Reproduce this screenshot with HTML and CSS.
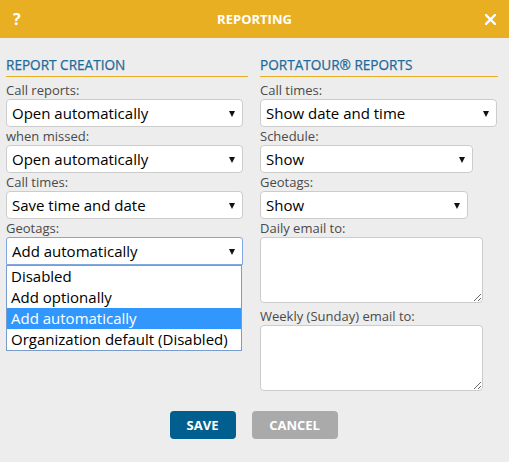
FILE: index.html
```html
<!DOCTYPE html>
<html lang="en">
<head>
  <meta charset="UTF-8" />
  <title>Reporting</title>
  <meta name="viewport" content="width=device-width, initial-scale=1.0" />
  <link rel="stylesheet" href="styles.css">
</head>
<body>
  <div class="dialog">
    <div class="titlebar">
      <span class="help">?</span>
      <span class="title">REPORTING</span>
      <svg class="close" width="11" height="11" viewBox="0 0 11 11">
        <path d="M1 1 L10 10 M10 1 L1 10" stroke="#fff" stroke-width="2.4" stroke-linecap="square" />
      </svg>
    </div>

    <div class="columns">
      <div class="col col-left">
        <h2>REPORT CREATION</h2>
        <label>Call reports:</label>
        <div class="select w-full">Open automatically</div>
        <label>when missed:</label>
        <div class="select w-full">Open automatically</div>
        <label>Call times:</label>
        <div class="select w-full">Save time and date</div>
        <label>Geotags:</label>
        <div class="dropdown-wrap">
          <div class="select w-full open">Add automatically</div>
          <ul class="options">
            <li>Disabled</li>
            <li>Add optionally</li>
            <li class="selected">Add automatically</li>
            <li>Organization default (Disabled)</li>
          </ul>
        </div>
      </div>

      <div class="col col-right">
        <h2>PORTATOUR&reg; REPORTS</h2>
        <label>Call times:</label>
        <div class="select w-full">Show date and time</div>
        <label>Schedule:</label>
        <div class="select w-schedule">Show</div>
        <label>Geotags:</label>
        <div class="select w-geo">Show</div>
        <label>Daily email to:</label>
        <textarea></textarea>
        <label>Weekly (Sunday) email to:</label>
        <textarea></textarea>
      </div>
    </div>

    <div class="buttons">
      <button class="save">SAVE</button>
      <button class="cancel">CANCEL</button>
    </div>
  </div>
</body>
</html>
```

FILE: styles.css
```css
body {
  margin: 0;
  background: #ededed;
  font-family: 'Open Sans', sans-serif;
  color: #4a4a4a;
}

.dialog {
  width: 509px;
  height: 462px;
  background: #ededed;
}

.titlebar {
  height: 38px;
  background: #e8af22;
  color: #fff;
  display: flex;
  align-items: center;
  justify-content: space-between;
  padding: 0 13px 0 13px;
  font-weight: 700;
}

.help {
  font-size: 16px;
  width: 11px;
}

.title {
  font-size: 13px;
}

.close {
  display: block;
}

.columns {
  display: flex;
  gap: 12px;
  padding: 18px 11px 0 6px;
}

.col {
  display: flex;
  flex-direction: column;
  align-items: flex-start;
}

.col-left {
  width: 242px;
}

.col-right {
  width: 238px;
}

h2 {
  margin: 0 0 4px;
  align-self: stretch;
  font-size: 13.6px;
  font-weight: 400;
  line-height: 18px;
  padding-bottom: 2px;
  color: #1d6a9c;
  border-bottom: 1.5px solid #e8af22;
  -webkit-text-stroke: 0.25px #1d6a9c;
}

label {
  font-size: 13px;
  line-height: 18px;
  color: #4a4a4a;
}

.select {
  position: relative;
  box-sizing: border-box;
  height: 28px;
  line-height: 26px;
  padding: 0 20px 0 5px;
  background: #fff;
  border: 1px solid #ccc;
  border-radius: 4px;
  font-size: 15px;
  color: #000;
}

.select::after {
  content: "";
  position: absolute;
  right: 7px;
  top: 11px;
  border-left: 3.5px solid transparent;
  border-right: 3.5px solid transparent;
  border-top: 6px solid #111;
}

.w-full { width: 237px; }
.w-schedule { width: 213px; }
.w-geo { width: 208px; }

.dropdown-wrap {
  position: relative;
}

.select.open {
  border-color: #7fa8e0;
  border-radius: 3px 3px 0 0;
}

.options {
  position: absolute;
  top: 28px;
  left: 0;
  width: 236px;
  margin: 0;
  padding: 0;
  list-style: none;
  background: #fff;
  border: 1px solid #7a9cc8;
  box-sizing: border-box;
}

.options li {
  height: 21px;
  line-height: 21px;
  padding-left: 4px;
  font-size: 15px;
  color: #000;
  white-space: nowrap;
}

.options li.selected {
  background: #3297fd;
  color: #fff;
}

textarea {
  box-sizing: border-box;
  width: 223px;
  height: 66px;
  margin: 0 0 4px;
  background: #fff;
  border: 1px solid #ccc;
  border-radius: 4px;
  resize: vertical;
  font-family: 'Open Sans', sans-serif;
}

.buttons {
  display: flex;
  justify-content: center;
  gap: 16px;
  padding: 16px 2px 0 0;
}

button {
  height: 28px;
  border: none;
  border-radius: 4px;
  color: #fff;
  font-family: 'Open Sans', sans-serif;
  font-size: 13px;
  font-weight: 700;
  cursor: pointer;
}

.save {
  width: 66px;
  background: #005f8e;
}

.cancel {
  width: 86px;
  background: #aaa;
}
```
